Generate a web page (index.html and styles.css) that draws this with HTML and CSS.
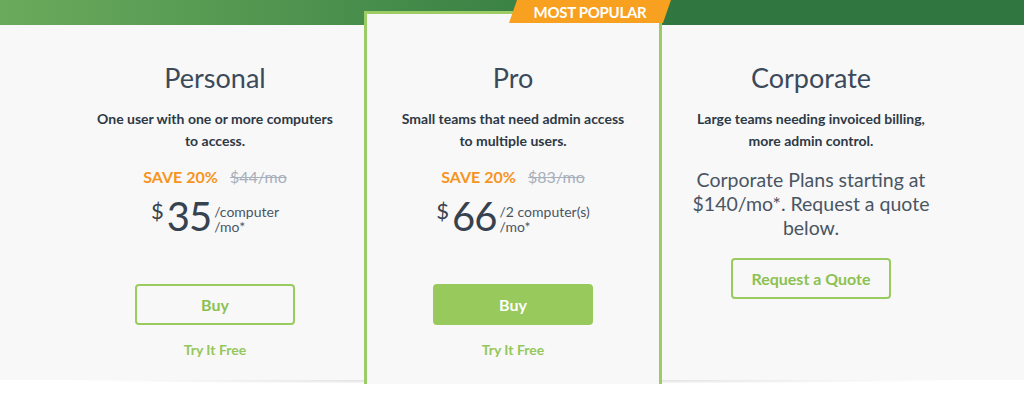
FILE: index.html
```html
<!DOCTYPE html>
<html lang="en">
<head>
    <meta charset="UTF-8">
    <meta name="viewport" content="width=device-width, initial-scale=1.0">
    <title>Pricing</title>
    <link rel="stylesheet" href="styles.css">
</head>
<body>
    <div class="band"></div>
    <section class="pricing">
        <div class="plans">
            <div class="plan">
                <h2>Personal</h2>
                <p class="desc">One user with one or more computers<br>to access.</p>
                <p class="save"><span class="save-label">SAVE 20%</span> <s>$44/mo</s></p>
                <div class="price">
                    <span class="currency">$</span>
                    <span class="amount">35</span>
                    <span class="per">/computer<br>/mo*</span>
                </div>
                <a class="btn btn-outline" href="#">Buy</a>
                <a class="try" href="#">Try It Free</a>
            </div>
            <div class="plan plan-featured">
                <div class="badge">Most Popular</div>
                <h2>Pro</h2>
                <p class="desc">Small teams that need admin access<br>to multiple users.</p>
                <p class="save"><span class="save-label">SAVE 20%</span> <s>$83/mo</s></p>
                <div class="price">
                    <span class="currency">$</span>
                    <span class="amount">66</span>
                    <span class="per">/2 computer(s)<br>/mo*</span>
                </div>
                <a class="btn btn-solid" href="#">Buy</a>
                <a class="try" href="#">Try It Free</a>
            </div>
            <div class="plan">
                <h2>Corporate</h2>
                <p class="desc">Large teams needing invoiced billing,<br>more admin control.</p>
                <p class="corp-text">Corporate Plans starting at<br>$140/mo*. Request a quote<br>below.</p>
                <a class="btn btn-outline btn-corp" href="#">Request a Quote</a>
            </div>
        </div>
    </section>
    <div class="pricing-shadow"></div>
</body>
</html>
```

FILE: styles.css
```css
body {
    margin: 0;
    background-color: #fff;
    font-family: Lato, "Open Sans", sans-serif;
    color: #3b4858;
}

.band {
    height: 25px;
    background: linear-gradient(90deg, #6aaa5c 0%, #3f8647 45%, #2f7640 66%, #2f7640 100%);
}

.pricing {
    background-color: #f8f8f8;
}

.plans {
    display: grid;
    grid-template-columns: repeat(3, 298px);
    padding-left: 66px;
}

.plan {
    display: flex;
    flex-direction: column;
    align-items: center;
    text-align: center;
    padding: 37px 0 20px;
}

.plan h2 {
    margin: 0;
    font-size: 27px;
    font-weight: 400;
    line-height: 32px;
    color: #3b4a5b;
}

.desc {
    margin: 14px 0 0;
    font-size: 14px;
    font-weight: 700;
    line-height: 22px;
    color: #2e3946;
}

.save {
    margin: 14px 0 0;
    font-size: 16px;
    line-height: 22px;
}

.save-label {
    font-weight: 700;
    color: #f7941d;
    margin-right: 8px;
}

.save s {
    color: #a7b0bb;
}

.price {
    display: flex;
    align-items: flex-start;
    margin-top: 8px;
    height: 40px;
    color: #36424f;
}

.currency {
    font-size: 22px;
    line-height: 22px;
    margin-top: 4px;
    margin-right: 3px;
}

.amount {
    font-size: 40px;
    line-height: 40px;
    letter-spacing: -1px;
    margin-right: 3px;
}

.per {
    font-size: 14px;
    line-height: 15px;
    margin-top: 8px;
    text-align: left;
    color: #4a5563;
}

.btn {
    display: block;
    box-sizing: border-box;
    width: 160px;
    height: 41px;
    line-height: 37px;
    border: 2px solid #9acb5f;
    border-radius: 4px;
    font-size: 16px;
    font-weight: 700;
    text-decoration: none;
    margin-top: 48px;
}

.btn-outline {
    color: #8cc152;
    background-color: transparent;
}

.btn-solid {
    color: #fff;
    background-color: #98c95c;
    border-color: #98c95c;
}

.btn-corp {
    margin-top: 18px;
}

.try {
    margin-top: 15px;
    font-size: 14px;
    font-weight: 700;
    line-height: 20px;
    color: #94c75d;
    text-decoration: none;
}

.corp-text {
    margin: 16px 0 0;
    font-size: 19.5px;
    line-height: 24px;
    color: #4a5563;
}

.plan-featured {
    position: relative;
    border: 3px solid #9ccc65;
    padding: 48px 0 26px;
    margin: -14px 0 -9px;
    background-color: #f8f8f8;
}

.badge {
    position: absolute;
    top: -14px;
    right: -12px;
    width: 162px;
    height: 23px;
    line-height: 24px;
    background-color: #f8a01f;
    clip-path: polygon(8px 0, 100% 0, calc(100% - 8px) 100%, 0 100%);
    color: #fff;
    font-size: 15px;
    font-weight: 700;
    text-transform: uppercase;
    letter-spacing: -0.3px;
}

.pricing-shadow {
    height: 4px;
    margin: 0 60px;
    background: radial-gradient(ellipse at top, rgba(0, 0, 0, 0.16), rgba(0, 0, 0, 0) 70%);
}
```
